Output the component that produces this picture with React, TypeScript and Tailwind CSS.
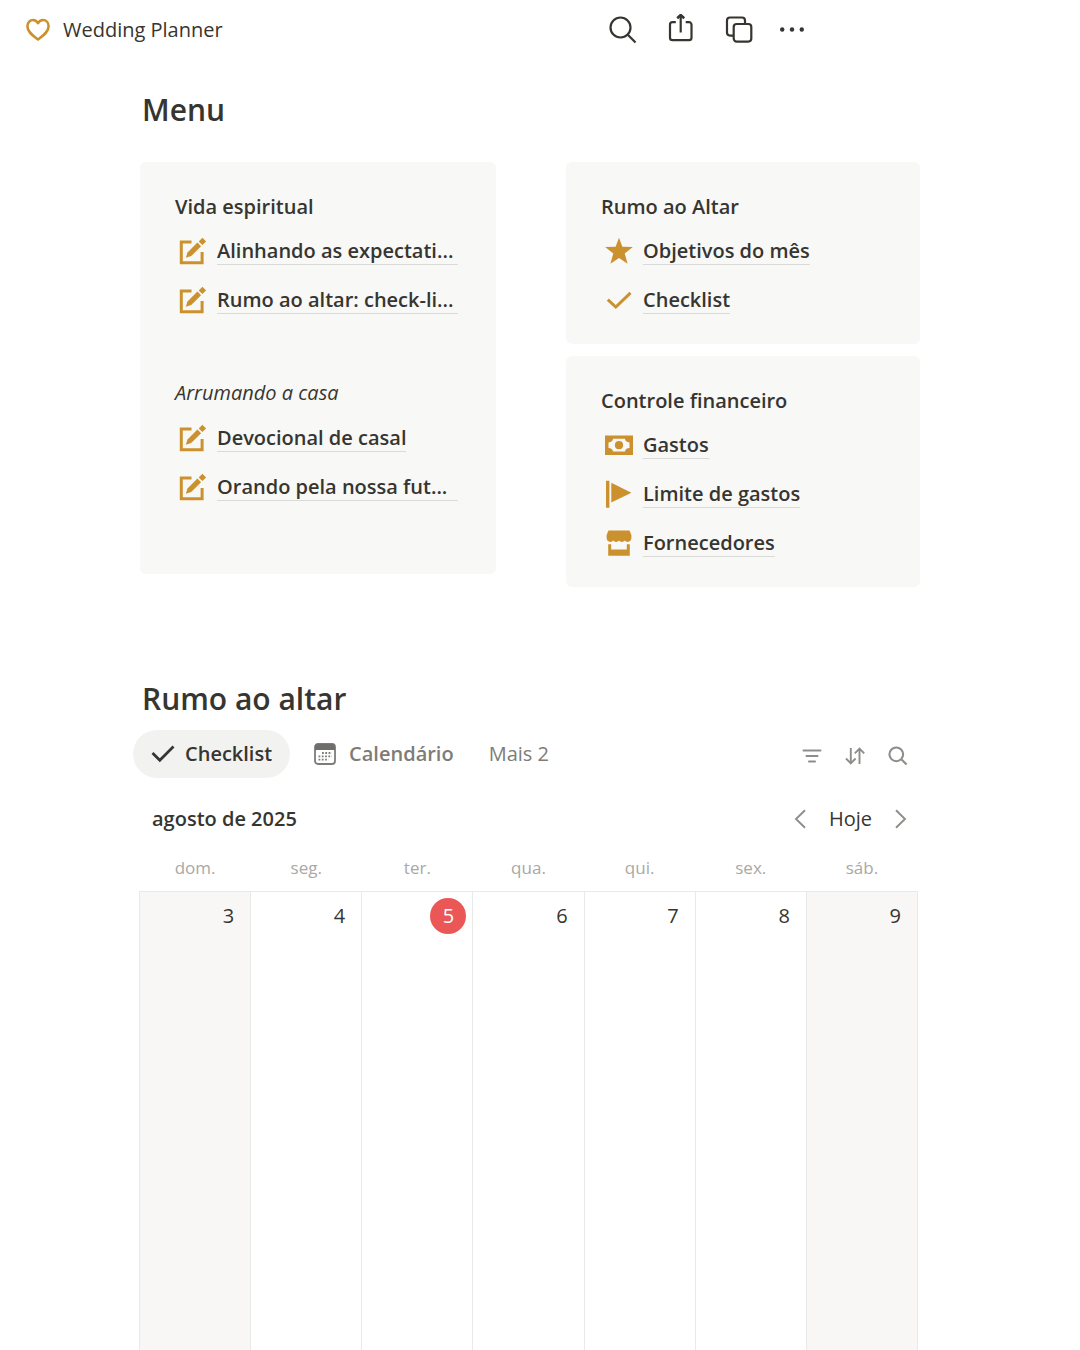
import type { ReactNode } from "react"

type LinkItem = {
  label: string
  icon: ReactNode
  wide?: boolean
}

type DayItem = {
  name: string
  day: number
  weekend?: boolean
  today?: boolean
}

const EditIcon = () => (
  <svg className="w-7 h-7 shrink-0" viewBox="0 0 28 28" fill="none" aria-hidden="true">
    <path d="M12.500 4.900H2.300v20.800h20.800V15" stroke="#cb912f" strokeWidth="3" />
    <path d="M6.800 20.800l1.700-5.400L18.400 5.500l3.700 3.700L12.200 19.100z" fill="#cb912f" />
    <path d="M19.700 4.400L23.400 0.800L27.100 4.400L23.400 8.100z" fill="#cb912f" />
  </svg>
)

const StarIcon = () => (
  <svg className="w-7 h-7 shrink-0" viewBox="0 0 28 28" fill="#cb912f" aria-hidden="true">
    <path d="M14 0.800l3.400 9 10.400 0.200-8.100 6.400 2.900 10.400-8.600-5.900-8.600 5.900 2.900-10.400-8.100-6.400 10.400-0.200z" />
  </svg>
)

const CheckIcon = () => (
  <svg className="w-7 h-7 shrink-0" viewBox="0 0 28 28" fill="none" aria-hidden="true">
    <path d="M2.800 13.600l8 7.400L25.500 6.800" stroke="#cb912f" strokeWidth="3" />
  </svg>
)

const MoneyIcon = () => (
  <svg className="w-7 h-7 shrink-0" viewBox="0 0 28 28" fill="#cb912f" aria-hidden="true">
    <path fillRule="evenodd" d="M0 4.500h28v19.500H0zM8 7.800c0 2-1.800 3.600-4.500 3.600v5.600c2.700 0 4.500 1.600 4.500 3.600h12c0-2 1.800-3.600 4.500-3.600v-5.600c-2.700 0-4.500-1.600-4.500-3.600z" />
    <circle cx="14" cy="14.200" r="4.100" />
  </svg>
)

const FlagIcon = () => (
  <svg className="w-7 h-7 shrink-0" viewBox="0 0 28 28" fill="#cb912f" aria-hidden="true">
    <path d="M1 0.800h3.400v27H1zM6.300 2.800L26.400 12.800 6.300 22.400z" />
  </svg>
)

const StoreIcon = () => (
  <svg className="w-7 h-7 shrink-0" viewBox="0 0 28 28" fill="#cb912f" aria-hidden="true">
    <path d="M3.500 1.500h21l1.900 4.500v3c0 2.200-1.600 3.900-3.700 3.900-1.300 0-2.300-.5-3-1.300-.6.800-1.500 1.300-2.800 1.300-1.300 0-2.200-.5-2.900-1.300-.7.800-1.600 1.300-2.900 1.300s-2.200-.5-2.800-1.300c-.7.800-1.700 1.300-3 1.300-2.100 0-3.700-1.700-3.700-3.900V6z" />
    <path d="M3.200 15.200h3v5.200h15.600v-5.200h3v11.600H3.200z" />
  </svg>
)

const SearchIcon = ({ className, width }: { className: string; width: number }) => (
  <svg className={className} viewBox="0 0 32 32" fill="none" stroke="currentColor" strokeWidth={width} aria-hidden="true">
    <circle cx="13.500" cy="13.500" r="10" />
    <path d="M20.800 20.800l7.700 7.700" />
  </svg>
)

const LinkRow = ({ label, icon, wide }: LinkItem) => (
  <li className="flex items-center h-[49px] ml-1 gap-2.5">
    {icon}
    <a href="#" className={`block h-7 leading-7 whitespace-nowrap font-semibold border-b border-[#dadad8] ${wide ? "flex-1" : ""}`}>
      {label}
    </a>
  </li>
)

const CardTitle = ({ children }: { children: ReactNode }) => (
  <h2 className="h-10 leading-[42px] font-semibold">{children}</h2>
)

const Card = ({ children, className }: { children: ReactNode; className?: string }) => (
  <section className={`bg-[#f8f8f7] rounded-md pt-6 pl-[35px] pr-[38px] ${className ?? "pb-5"}`}>{children}</section>
)

const days: DayItem[] = [
  { name: "dom.", day: 3, weekend: true },
  { name: "seg.", day: 4 },
  { name: "ter.", day: 5, today: true },
  { name: "qua.", day: 6 },
  { name: "qui.", day: 7 },
  { name: "sex.", day: 8 },
  { name: "sáb.", day: 9, weekend: true },
]

const Header = () => (
  <header className="flex items-center justify-between h-[60px] pl-[26px] pr-[276px]">
    <a href="#" className="flex items-center gap-[13px]">
      <svg className="w-6 h-6" viewBox="0 0 24 24" fill="none" stroke="#cb912f" strokeWidth="2.600" strokeLinejoin="round" aria-hidden="true">
        <path d="M12 21.500C7.500 18 1.400 14.200 1.400 8.200 1.400 4.700 3.800 2 7 2c2.100 0 3.900 1.100 5 3.200C13.100 3.100 14.900 2 17 2c3.200 0 5.600 2.700 5.600 6.200C22.600 14.200 16.500 18 12 21.500z" />
      </svg>
      Wedding Planner
    </a>
    <div className="flex items-center gap-6">
      <button aria-label="Buscar" className="flex justify-center w-[34px]">
        <SearchIcon className="w-8 h-8" width={2.2} />
      </button>
      <button aria-label="Compartilhar" className="flex justify-center w-[34px]">
        <svg className="w-8 h-8" viewBox="0 0 32 32" fill="none" stroke="currentColor" strokeWidth="2.200" aria-hidden="true">
          <path d="M10.800 8.200H7.500a2.500 2.500 0 0 0-2.500 2.500v13a2.500 2.500 0 0 0 2.500 2.500h16.500a2.500 2.500 0 0 0 2.500-2.500v-13a2.500 2.500 0 0 0-2.500-2.500h-3.300" />
          <path d="M15.700 18.500V2" />
          <path d="M12.200 4.300l3.500-3.300 3.500 3.300" strokeWidth="2.600" />
        </svg>
      </button>
      <button aria-label="Duplicar" className="flex justify-center w-[34px]">
        <svg className="w-8 h-8" viewBox="0 0 32 32" fill="none" stroke="currentColor" strokeWidth="2.200" aria-hidden="true">
          <rect x="10.700" y="10" width="17.600" height="17.600" rx="3" />
          <path d="M10.700 21.600H7a3 3 0 0 1-3-3V6.500a3 3 0 0 1 3-3h12a3 3 0 0 1 3 3V10" />
        </svg>
      </button>
      <button aria-label="Mais opções">
        <svg className="w-6 h-8" viewBox="0 0 24 32" fill="currentColor" aria-hidden="true">
          <circle cx="2.200" cy="15.500" r="2.200" />
          <circle cx="12" cy="15.500" r="2.200" />
          <circle cx="21.800" cy="15.500" r="2.200" />
        </svg>
      </button>
    </div>
  </header>
)

const Menu = () => (
  <section>
    <h1 className="text-3xl leading-10 font-semibold ml-0.5">Menu</h1>
    <div className="grid grid-cols-[356fr_354fr] items-start gap-[70px] mt-8">
      <Card className="pb-[63px]">
        <CardTitle>Vida espiritual</CardTitle>
        <ul>
          <LinkRow label="Alinhando as expectati..." icon={<EditIcon />} wide />
          <LinkRow label="Rumo ao altar: check-li..." icon={<EditIcon />} wide />
        </ul>
        <h2 className="leading-10 italic mt-[49px]">Arrumando a casa</h2>
        <ul>
          <LinkRow label="Devocional de casal" icon={<EditIcon />} />
          <LinkRow label="Orando pela nossa fut..." icon={<EditIcon />} wide />
        </ul>
      </Card>
      <div className="flex flex-col gap-3">
        <Card>
          <CardTitle>Rumo ao Altar</CardTitle>
          <ul>
            <LinkRow label="Objetivos do mês" icon={<StarIcon />} />
            <LinkRow label="Checklist" icon={<CheckIcon />} />
          </ul>
        </Card>
        <Card>
          <CardTitle>Controle financeiro</CardTitle>
          <ul>
            <LinkRow label="Gastos" icon={<MoneyIcon />} />
            <LinkRow label="Limite de gastos" icon={<FlagIcon />} />
            <LinkRow label="Fornecedores" icon={<StoreIcon />} />
          </ul>
        </Card>
      </div>
    </div>
  </section>
)

const Tabs = () => (
  <div className="flex items-center justify-between mt-[11px] -ml-[7px] pr-[11px]">
    <div className="flex items-center text-[#7d7c78]">
      <button className="flex items-center gap-2.5 h-12 px-[18px] rounded-full bg-[#f2f2f1] text-[#37352f] font-semibold">
        <svg className="w-6 h-6" viewBox="0 0 24 24" fill="none" stroke="currentColor" strokeWidth="2.700" aria-hidden="true">
          <path d="M1.500 11l7.300 7.300L22.500 4.500" />
        </svg>
        Checklist
      </button>
      <button className="flex items-center gap-[13px] ml-6 font-semibold">
        <svg className="w-[22px] h-[22px]" viewBox="0 0 22 22" fill="none" aria-hidden="true">
          <rect x="1" y="1" width="20" height="20" rx="3" stroke="#7d7c78" strokeWidth="1.800" />
          <path d="M1 7V4a3 3 0 0 1 3-3h14a3 3 0 0 1 3 3v3z" fill="#6f6e6a" />
          <path d="M8 10h10M4.500 13.300h13.500M4.500 16.600h10" stroke="#7d7c78" strokeWidth="1.800" strokeDasharray="1.800 1.500" />
        </svg>
        Calendário
      </button>
      <button className="ml-[35px]">Mais 2</button>
    </div>
    <div className="flex items-center gap-[21px] pt-1 text-[#8e8d89]">
      <button aria-label="Filtrar">
        <svg className="w-[22px] h-[22px]" viewBox="0 0 22 22" fill="none" stroke="currentColor" strokeWidth="2" strokeLinecap="round" aria-hidden="true">
          <path d="M2.500 5.500h17M5.500 11h11M8 16.500h6" />
        </svg>
      </button>
      <button aria-label="Ordenar">
        <svg className="w-[22px] h-[22px]" viewBox="0 0 22 22" fill="none" stroke="currentColor" strokeWidth="1.900" aria-hidden="true">
          <path d="M6.800 3v15M2 13.500l4.800 4.800 4.800-4.800M15.500 19V4M10.800 8.300l4.700-4.700 4.700 4.700" />
        </svg>
      </button>
      <button aria-label="Buscar na lista">
        <SearchIcon className="w-[22px] h-[22px]" width={3} />
      </button>
    </div>
  </div>
)

const Calendar = () => (
  <section className="-ml-px mr-0.5">
    <div className="flex items-center justify-between h-10 mt-[21px] pl-[13px] pr-2.5">
      <h3 className="font-semibold">agosto de 2025</h3>
      <div className="flex items-center">
        <button aria-label="Semana anterior" className="text-[#8e8d89]">
          <svg className="w-3.5 h-5" viewBox="0 0 14 20" fill="none" stroke="currentColor" strokeWidth="1.900" aria-hidden="true">
            <path d="M12 1.200L3 10l9 8.800" />
          </svg>
        </button>
        <button className="mx-[22px]">Hoje</button>
        <button aria-label="Próxima semana" className="text-[#8e8d89]">
          <svg className="w-3.5 h-5" viewBox="0 0 14 20" fill="none" stroke="currentColor" strokeWidth="1.900" aria-hidden="true">
            <path d="M2 1.200L11 10l-9 8.800" />
          </svg>
        </button>
      </div>
    </div>
    <table className="w-full table-fixed border-collapse mt-[7px]">
      <thead>
        <tr>
          {days.map((d) => (
            <th key={d.name} className="h-[45px] text-[17px] font-normal text-[#a9a8a5]">{d.name}</th>
          ))}
        </tr>
      </thead>
      <tbody>
        <tr>
          {days.map((d) => (
            <td key={d.day} className={`h-[459px] align-top border border-b-0 border-[#e9e9e7] pt-1.5 ${d.weekend ? "bg-[#f8f7f6]" : ""}`}>
              {d.today ? (
                <span className="flex items-center justify-center w-9 h-9 ml-auto mr-1.5 rounded-full bg-[#eb5757] text-white">{d.day}</span>
              ) : (
                <span className="flex items-center justify-end h-9 pr-4">{d.day}</span>
              )}
            </td>
          ))}
        </tr>
      </tbody>
    </table>
  </section>
)

const App = () => {
  return (
    <div className="bg-white text-[#37352f] text-xl font-['Open_Sans','Noto_Sans',sans-serif]">
      <Header />
      <main className="pt-[30px] pl-[140px] pr-40">
        <Menu />
        <section className="mt-[92px]">
          <h2 className="text-3xl leading-10 font-semibold ml-0.5">Rumo ao altar</h2>
          <Tabs />
          <Calendar />
        </section>
      </main>
    </div>
  )
}
export default App
